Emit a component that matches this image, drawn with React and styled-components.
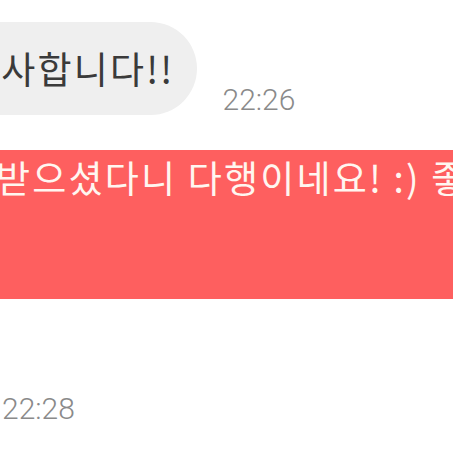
import React from "react";
import styled, { createGlobalStyle } from "styled-components";

const GlobalStyle = createGlobalStyle`
    html, body {
        margin: 0;
        padding: 0;
        background: #ffffff;
    }
    body {
        width: 453px;
        height: 453px;
        overflow: hidden;
        font-family: "Noto Sans CJK KR", "Noto Sans", sans-serif;
    }
`;

const Chat = styled.div`
    width: 453px;
    height: 453px;
    overflow: hidden;
    display: flex;
    flex-direction: column;
    padding-top: 22px;
    box-sizing: border-box;
`;

const Row = styled.div`
    display: flex;
    align-items: flex-end;
    gap: 26px;
`;

const Bubble = styled.div`
    display: flex;
    white-space: nowrap;
    overflow: hidden;
    font-size: 37px;
    letter-spacing: 2.2px;
    line-height: 1.3;
    background: ${props => props.mine ? "#fe5f5f" : "#efefef"};
    color: ${props => props.mine ? "#fff6f0" : "#3a3a3a"};
    height: ${props => props.mine ? "146px" : "93px"};
    border-radius: ${props => props.mine ? "0" : "0 47px 47px 0"};
    margin-top: ${props => props.mine ? "35px" : "0"};
    margin-left: ${props => props.mine ? "0" : "-60px"};
    padding: ${props => props.mine ? "3px 0 0 0" : "0 22px 0 25px"};
    align-items: ${props => props.mine ? "flex-start" : "center"};
`;

const Hidden = styled.span`
    margin-left: ${props => props.offset}px;
`;

const Time = styled.div`
    font-family: Roboto, "Liberation Sans", sans-serif;
    font-weight: 300;
    font-size: 30px;
    line-height: 1;
    color: #8a8a8a;
    margin-top: ${props => props.top || 0}px;
    padding-left: ${props => props.left || 0}px;
`;

export default function App() {
    return (
        <>
            <GlobalStyle />
            <Chat>
                <Row>
                    <Bubble>감사합니다!!</Bubble>
                    <Time>22:26</Time>
                </Row>
                <Bubble mine>
                    <Hidden offset={-4}>받으셨다니 다행이네요! :) 좋은 하루 보내세요</Hidden>
                </Bubble>
                <Time top={95} left={2}>22:28</Time>
            </Chat>
        </>
    );
}
